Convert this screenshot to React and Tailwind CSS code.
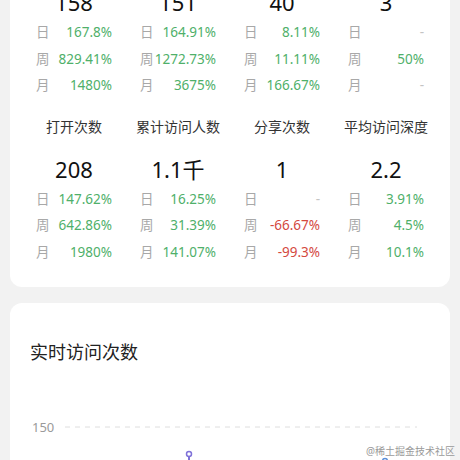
const blocks = [
    [
        { label: "访问人数", value: "158", rows: ["167.8%", "829.41%", "1480%"] },
        { label: "新访问用户", value: "151", rows: ["164.91%", "1272.73%", "3675%"] },
        { label: "分享人数", value: "40", rows: ["8.11%", "11.11%", "166.67%"] },
        { label: "人均停留", value: "3", rows: ["-", "50%", "-"] },
    ],
    [
        { label: "打开次数", value: "208", rows: ["147.62%", "642.86%", "1980%"] },
        { label: "累计访问人数", value: "1.1千", rows: ["16.25%", "31.39%", "141.07%"] },
        { label: "分享次数", value: "1", rows: ["-", "-66.67%", "-99.3%"] },
        { label: "平均访问深度", value: "2.2", rows: ["3.91%", "4.5%", "10.1%"] },
    ],
];

const rowNames = ["日", "周", "月"];

function Rate({ text }) {
    let color = "text-[#4fb06a]";
    if (text === "-") color = "text-[#c4c4c4]";
    else if (text.startsWith("-")) color = "text-[#d4493f]";
    return <span className={color}>{text}</span>;
}

function StatCell({ item }) {
    return (
        <div className="flex flex-col items-center">
            <div className="text-[14px] leading-5 text-[#333]">{item.label}</div>
            <div className="mt-[17px] text-[22px] leading-[30px] text-[#111]">{item.value}</div>
            <div className="mt-[2px] w-full px-[14px]">
                {item.rows.map((r, i) => (
                    <div key={i} className="flex h-[26.5px] items-center justify-between text-[13.5px]">
                        <span className="text-[#a8a8a8]">{rowNames[i]}</span>
                        <Rate text={r} />
                    </div>
                ))}
            </div>
        </div>
    );
}

export default function App() {
    return (
        <div
            className="relative h-[460px] overflow-hidden bg-[#f2f2f2] px-[10px]"
            style={{ fontFamily: '"Noto Sans", "Noto Sans CJK SC", sans-serif' }}
        >
            {/* overview card, scrolled partly out of view */}
            <div className="-mt-[62px] flex flex-col gap-[18px] rounded-[12px] bg-white px-3 pb-[22px] pt-3">
                {blocks.map((block, bi) => (
                    <div key={bi} className="grid grid-cols-4">
                        {block.map((item) => (
                            <StatCell key={item.label} item={item} />
                        ))}
                    </div>
                ))}
            </div>

            {/* realtime chart card */}
            <div className="mt-4 rounded-[12px] bg-white px-5 pb-4 pt-[37px]">
                <div className="text-[18px] leading-6 text-[#222]">实时访问次数</div>
                <svg className="mt-[46px] block" width="400" height="60">
                    <text x="2" y="21.5" fontSize="13" fill="#9a9a9a">
                        150
                    </text>
                    <line x1="35" y1="17" x2="387" y2="17" stroke="#dedede" strokeWidth="1" strokeDasharray="5 5" />
                    <line x1="159" y1="46.5" x2="159" y2="62" stroke="#7f72d9" strokeWidth="2" />
                    <circle cx="159" cy="44" r="2.5" fill="#fff" stroke="#7f72d9" strokeWidth="1.5" />
                    <circle cx="355" cy="51" r="2.5" fill="#fff" stroke="#5b8fd9" strokeWidth="1.5" />
                </svg>
            </div>

            <div className="absolute bottom-[3px] right-[5px] text-[10px] leading-[12px] text-[#9a9a9a]">
                @稀土掘金技术社区
            </div>
        </div>
    );
}
